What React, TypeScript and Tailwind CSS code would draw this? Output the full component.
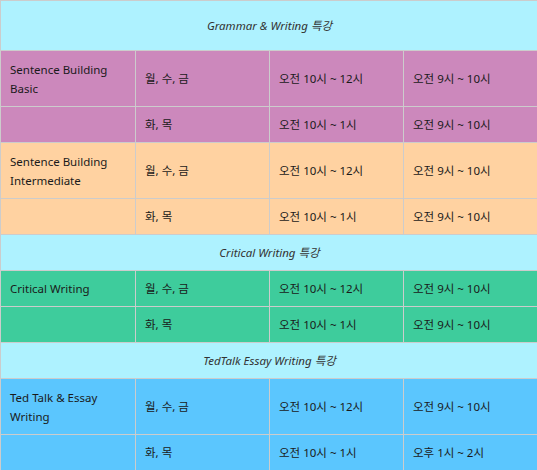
import React from "react";

type Row = { name: string; days: string; a: string; b: string };

const groups = [
  {
    title: "Grammar & Writing 특강",
    titleClass: "h-[50px]",
    bg: "bg-[#cc88bc]",
    rows: [
      { name: "Sentence Building Basic", days: "월, 수, 금", a: "오전 10시 ~ 12시", b: "오전 9시 ~ 10시" },
      { name: "", days: "화, 목", a: "오전 10시 ~ 1시", b: "오전 9시 ~ 10시" },
    ],
  },
  {
    title: "",
    titleClass: "",
    bg: "bg-[#ffd2a1]",
    rows: [
      { name: "Sentence Building Intermediate", days: "월, 수, 금", a: "오전 10시 ~ 12시", b: "오전 9시 ~ 10시" },
      { name: "", days: "화, 목", a: "오전 10시 ~ 1시", b: "오전 9시 ~ 10시" },
    ],
  },
  {
    title: "Critical Writing 특강",
    titleClass: "h-[36px]",
    bg: "bg-[#3ecc9c]",
    rows: [
      { name: "Critical Writing", days: "월, 수, 금", a: "오전 10시 ~ 12시", b: "오전 9시 ~ 10시" },
      { name: "", days: "화, 목", a: "오전 10시 ~ 1시", b: "오전 9시 ~ 10시" },
    ],
  },
  {
    title: "TedTalk Essay Writing 특강",
    titleClass: "h-[36px]",
    bg: "bg-[#5bc6fe]",
    rows: [
      { name: "Ted Talk & Essay Writing", days: "월, 수, 금", a: "오전 10시 ~ 12시", b: "오전 9시 ~ 10시" },
      { name: "", days: "화, 목", a: "오전 10시 ~ 1시", b: "오후 1시 ~ 2시" },
    ],
  },
];

const cell = "border border-[#cccccc] px-[9px] py-[8px] align-middle leading-[19px]";

const App = () => {
  return (
    <div
      className="w-[537px] h-[470px] overflow-hidden bg-white text-[11.5px] text-[#1a1a1a]"
      style={{ fontFamily: '"Noto Sans", "Noto Sans CJK KR", sans-serif' }}
    >
      <table className="w-[538px] table-fixed border-collapse">
        <colgroup>
          <col className="w-[135px]" />
          <col className="w-[134px]" />
          <col className="w-[134px]" />
          <col className="w-[135px]" />
        </colgroup>
        <tbody>
          {groups.map((g, gi) => (
            <React.Fragment key={gi}>
              {g.title && (
                <tr className="bg-[#aef2ff]">
                  <td colSpan={4} className={`${cell} ${g.titleClass} text-center italic text-[#333333]`}>
                    {g.title}
                  </td>
                </tr>
              )}
              {g.rows.map((r: Row, ri) => (
                <tr key={ri} className={g.bg}>
                  <td className={`${cell} ${r.name.length > 18 ? "h-[56px]" : "h-[36px]"}`}>{r.name}</td>
                  <td className={cell}>{r.days}</td>
                  <td className={cell}>{r.a}</td>
                  <td className={cell}>{r.b}</td>
                </tr>
              ))}
            </React.Fragment>
          ))}
        </tbody>
      </table>
    </div>
  );
};

export default App;
